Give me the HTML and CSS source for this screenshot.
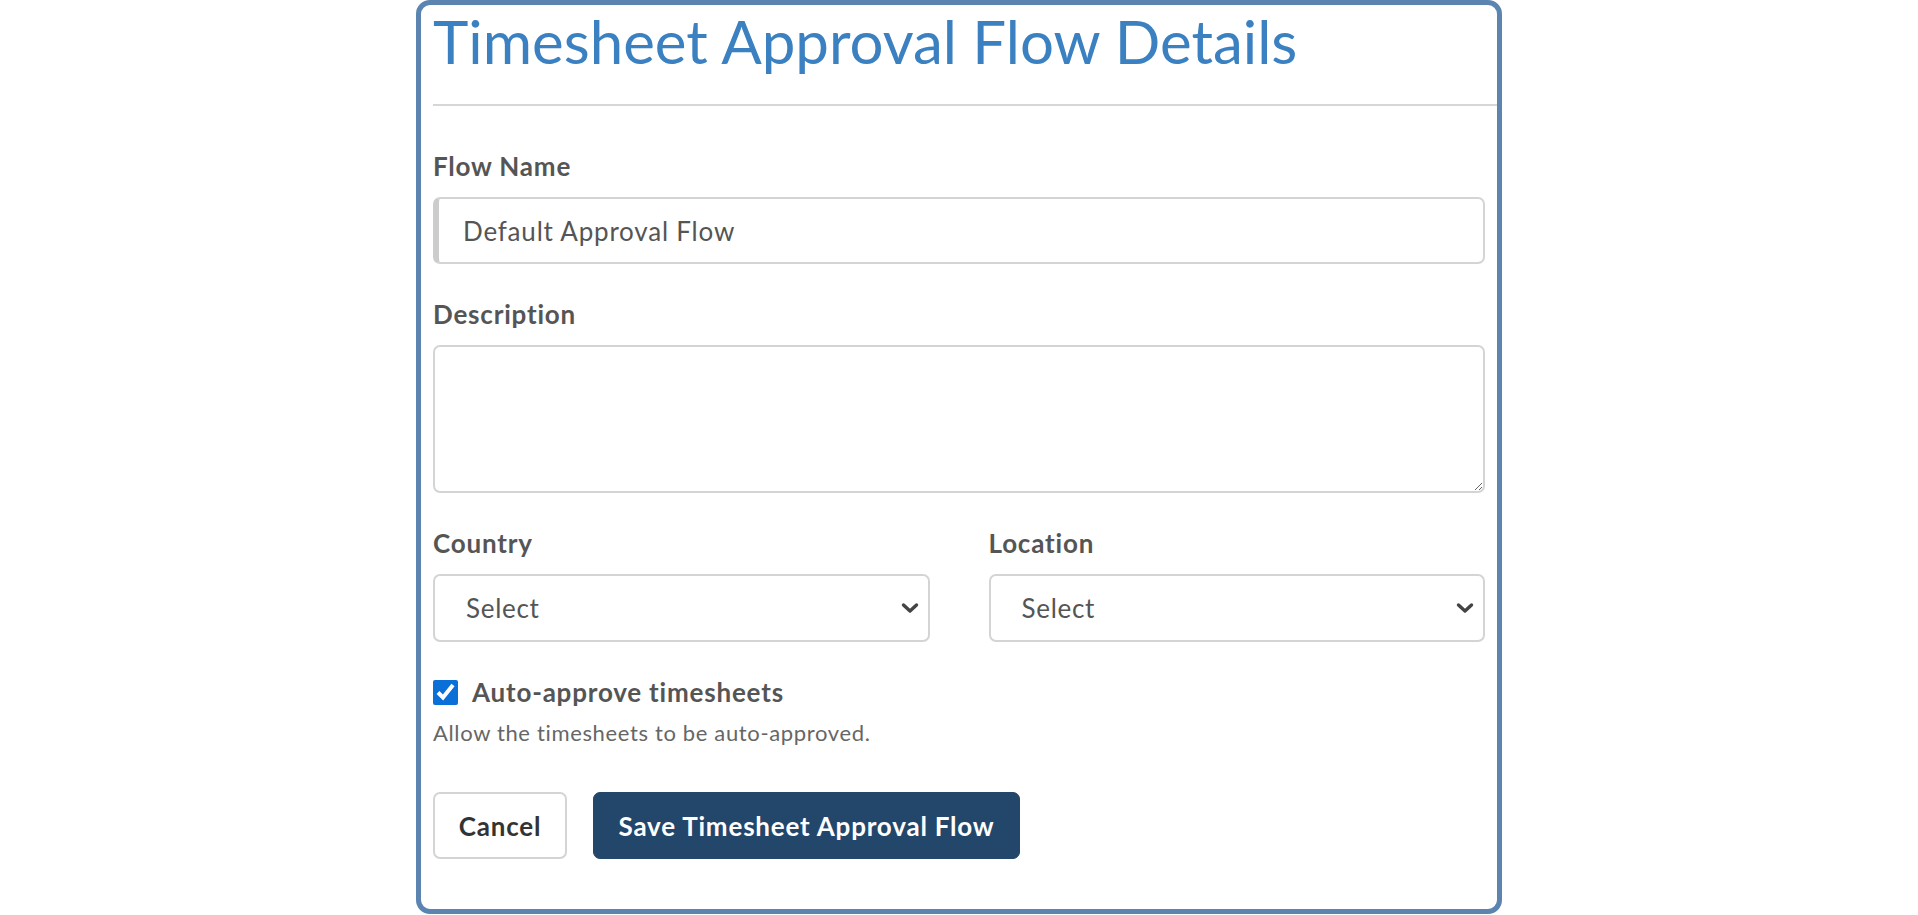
FILE: index.html
```html
<!DOCTYPE html>
<html>
<head>
<meta charset="utf-8">
<link rel="stylesheet" href="styles.css">
</head>
<body>
<div class="card">
  <h1 class="title">Timesheet Approval Flow Details</h1>
  <hr class="divider">
  <form class="form">
    <div class="field">
      <label class="label">Flow Name</label>
      <input class="control control-name" type="text" value="Default Approval Flow">
    </div>
    <div class="field">
      <label class="label">Description</label>
      <textarea class="control control-area"></textarea>
    </div>
    <div class="row">
      <div class="field">
        <label class="label">Country</label>
        <select class="control control-select"><option>Select</option></select>
      </div>
      <div class="field">
        <label class="label">Location</label>
        <select class="control control-select"><option>Select</option></select>
      </div>
    </div>
    <div class="check">
      <label class="check-line"><input type="checkbox" class="check-box" checked> <span class="check-text">Auto-approve timesheets</span></label>
      <div class="help">Allow the timesheets to be auto-approved.</div>
    </div>
    <div class="actions">
      <button type="button" class="btn btn-cancel">Cancel</button>
      <button type="button" class="btn btn-save">Save Timesheet Approval Flow</button>
    </div>
  </form>
</div>
</body>
</html>
```
FILE: styles.css
```css
html, body {
  margin: 0;
  padding: 0;
  background: #ffffff;
}
body {
  font-family: Lato, "Open Sans", sans-serif;
  color: #555;
}
.card {
  box-sizing: border-box;
  width: 1086px;
  height: 914px;
  margin: 0 auto;
  border: 5px solid #5b85b0;
  border-radius: 14px;
  padding: 0 12px;
  background: #fff;
}
.title {
  margin: 0;
  padding-top: 0;
  font-weight: 400;
  font-size: 60px;
  line-height: 74px;
  color: #3b80c0;
  margin-top: -1px;
}
.divider {
  border: 0;
  border-top: 2px solid #d6d6d6;
  margin: 26px -12px 0 0;
  height: 0;
}
.form {
  display: flex;
  flex-direction: column;
}
.field {
  display: flex;
  flex-direction: column;
}
.label {
  font-weight: 700;
  font-size: 26px;
  line-height: 30px;
  color: #555;
  letter-spacing: 0.8px;
  margin-bottom: 16px;
}
.form > .field:first-child .label {
  margin-top: 45px;
}
.control {
  box-sizing: border-box;
  font-family: Lato, "Open Sans", sans-serif;
  font-size: 26px;
  letter-spacing: 0.8px;
  color: #555;
  border: 2px solid #d4d4d4;
  border-radius: 7px;
  background: #fff;
  outline: none;
}
.control-name {
  height: 67px;
  padding: 0 0 0 24px;
  border-left: 6px solid #cccccc;
}
.control-area {
  height: 148px;
  resize: vertical;
  padding: 10px 24px;
}
.form > .field + .field .label,
.row .label {
  margin-top: 35px;
}
.row {
  display: grid;
  grid-template-columns: 1fr 1fr;
  column-gap: 59px;
}
.control-select {
  height: 68px;
  padding: 0 0 0 31px;
  letter-spacing: 0.7px;
  -webkit-appearance: none;
  appearance: none;
  background-image: url("data:image/svg+xml;utf8,<svg xmlns='http://www.w3.org/2000/svg' width='18' height='12' viewBox='0 0 18 12'><path d='M2.5 3 L9 9 L15.5 3' fill='none' stroke='%23444' stroke-width='3.4' stroke-linecap='round' stroke-linejoin='round'/></svg>");
  background-repeat: no-repeat;
  background-position: right 9px center;
  background-size: 18px 12px;
}
.check {
  margin-top: 37px;
  display: flex;
  flex-direction: column;
}
.check-line {
  display: flex;
  align-items: center;
  gap: 14px;
  height: 26px;
}
.check-box {
  width: 25px;
  height: 25px;
  margin: 0;
  accent-color: #0b6fd8;
}
.check-text {
  font-weight: 700;
  font-size: 26px;
  letter-spacing: 0.8px;
  color: #555;
}
.help {
  margin-top: 15px;
  font-size: 22px;
  line-height: 26px;
  letter-spacing: 0.65px;
  color: #666;
}
.actions {
  display: flex;
  gap: 26px;
  margin-top: 46px;
}
.btn {
  height: 67px;
  border-radius: 7px;
  font-family: Lato, "Open Sans", sans-serif;
  font-weight: 700;
  font-size: 26px;
  letter-spacing: 0.8px;
  cursor: pointer;
  padding: 0;
}
.btn-cancel {
  width: 134px;
  background: #fff;
  border: 2px solid #d4d4d4;
  color: #333;
}
.btn-save {
  width: 427px;
  background: #23466b;
  border: 1px solid #23466b;
  color: #fff;
}
```
